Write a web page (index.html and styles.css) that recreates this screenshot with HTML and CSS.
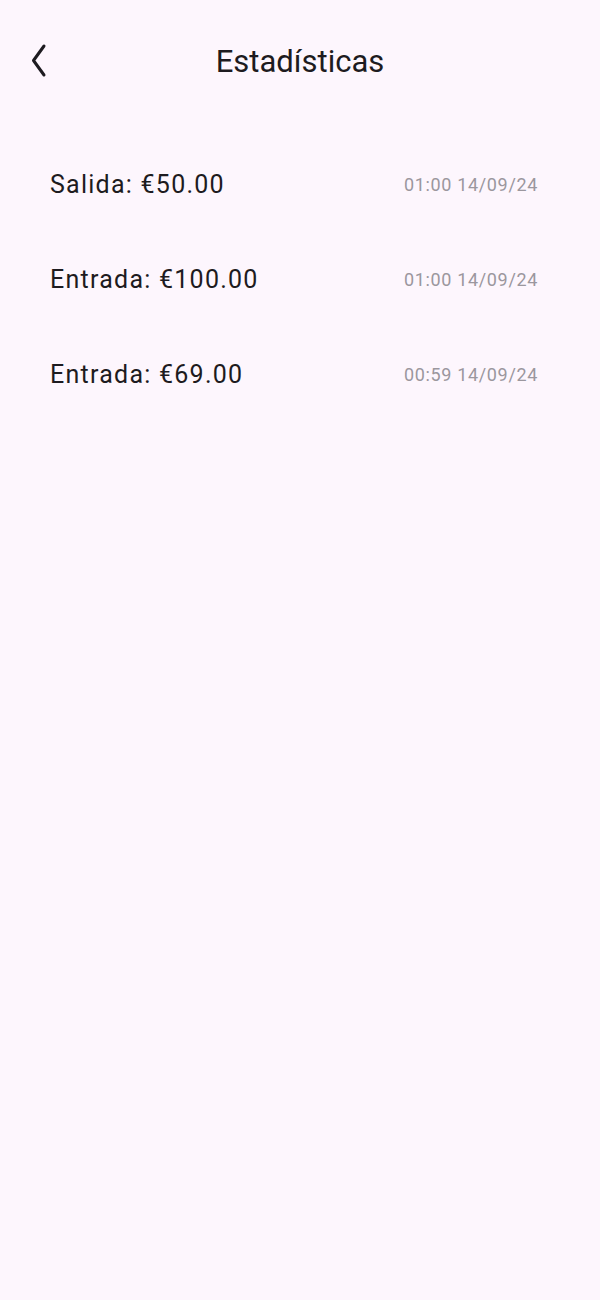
FILE: index.html
```html
<!DOCTYPE html>
<html lang="es">
<head>
    <meta charset="UTF-8">
    <meta name="viewport" content="width=device-width, initial-scale=1.0">
    <title>Estadísticas</title>
    <link rel="stylesheet" href="styles.css">
</head>
<body>
    <div class="screen">
        <!-- Barra superior -->
        <header class="app-bar">
            <div class="back-button">
                <svg width="20" height="36" viewBox="0 0 20 36" fill="none" stroke="#1d1b20" stroke-width="3" stroke-linecap="round" stroke-linejoin="round">
                    <polyline points="15,3 4.5,17.5 15,32"></polyline>
                </svg>
            </div>
            <h1 class="app-title">Estadísticas</h1>
        </header>

        <!-- Lista de movimientos -->
        <ul class="movement-list">
            <li class="movement-item">
                <span class="movement-label">Salida: €50.00</span>
                <span class="movement-date">01:00 14/09/24</span>
            </li>
            <li class="movement-item">
                <span class="movement-label">Entrada: €100.00</span>
                <span class="movement-date">01:00 14/09/24</span>
            </li>
            <li class="movement-item">
                <span class="movement-label">Entrada: €69.00</span>
                <span class="movement-date">00:59 14/09/24</span>
            </li>
        </ul>
    </div>
</body>
</html>
```

FILE: styles.css
```css
/* Página base */
html, body {
    margin: 0;
    padding: 0;
    width: 100%;
    height: 100%;
    background: #fdf6fd;
    font-family: Roboto, "Noto Sans", sans-serif;
    color: #1d1b20;
}

.screen {
    min-height: 100%;
}

/* Barra superior */
.app-bar {
    height: 137px;
    display: flex;
    align-items: flex-start;
    justify-content: center;
    position: relative;
    padding-top: 42px;
    box-sizing: border-box;
}

.back-button {
    position: absolute;
    left: 29px;
    top: 43px;
    width: 20px;
    height: 36px;
    cursor: pointer;
}

.app-title {
    margin: 0;
    font-size: 31px;
    font-weight: 400;
    line-height: 40px;
    letter-spacing: 0;
}

/* Lista */
.movement-list {
    list-style: none;
    margin: 0;
    padding: 0 62px 0 50px;
}

.movement-item {
    height: 95px;
    display: flex;
    justify-content: space-between;
    align-items: center;
}

.movement-label {
    font-size: 25px;
    letter-spacing: 1.25px;
}

.movement-date {
    font-size: 18px;
    color: #9b979e;
    letter-spacing: 0.65px;
}
```
